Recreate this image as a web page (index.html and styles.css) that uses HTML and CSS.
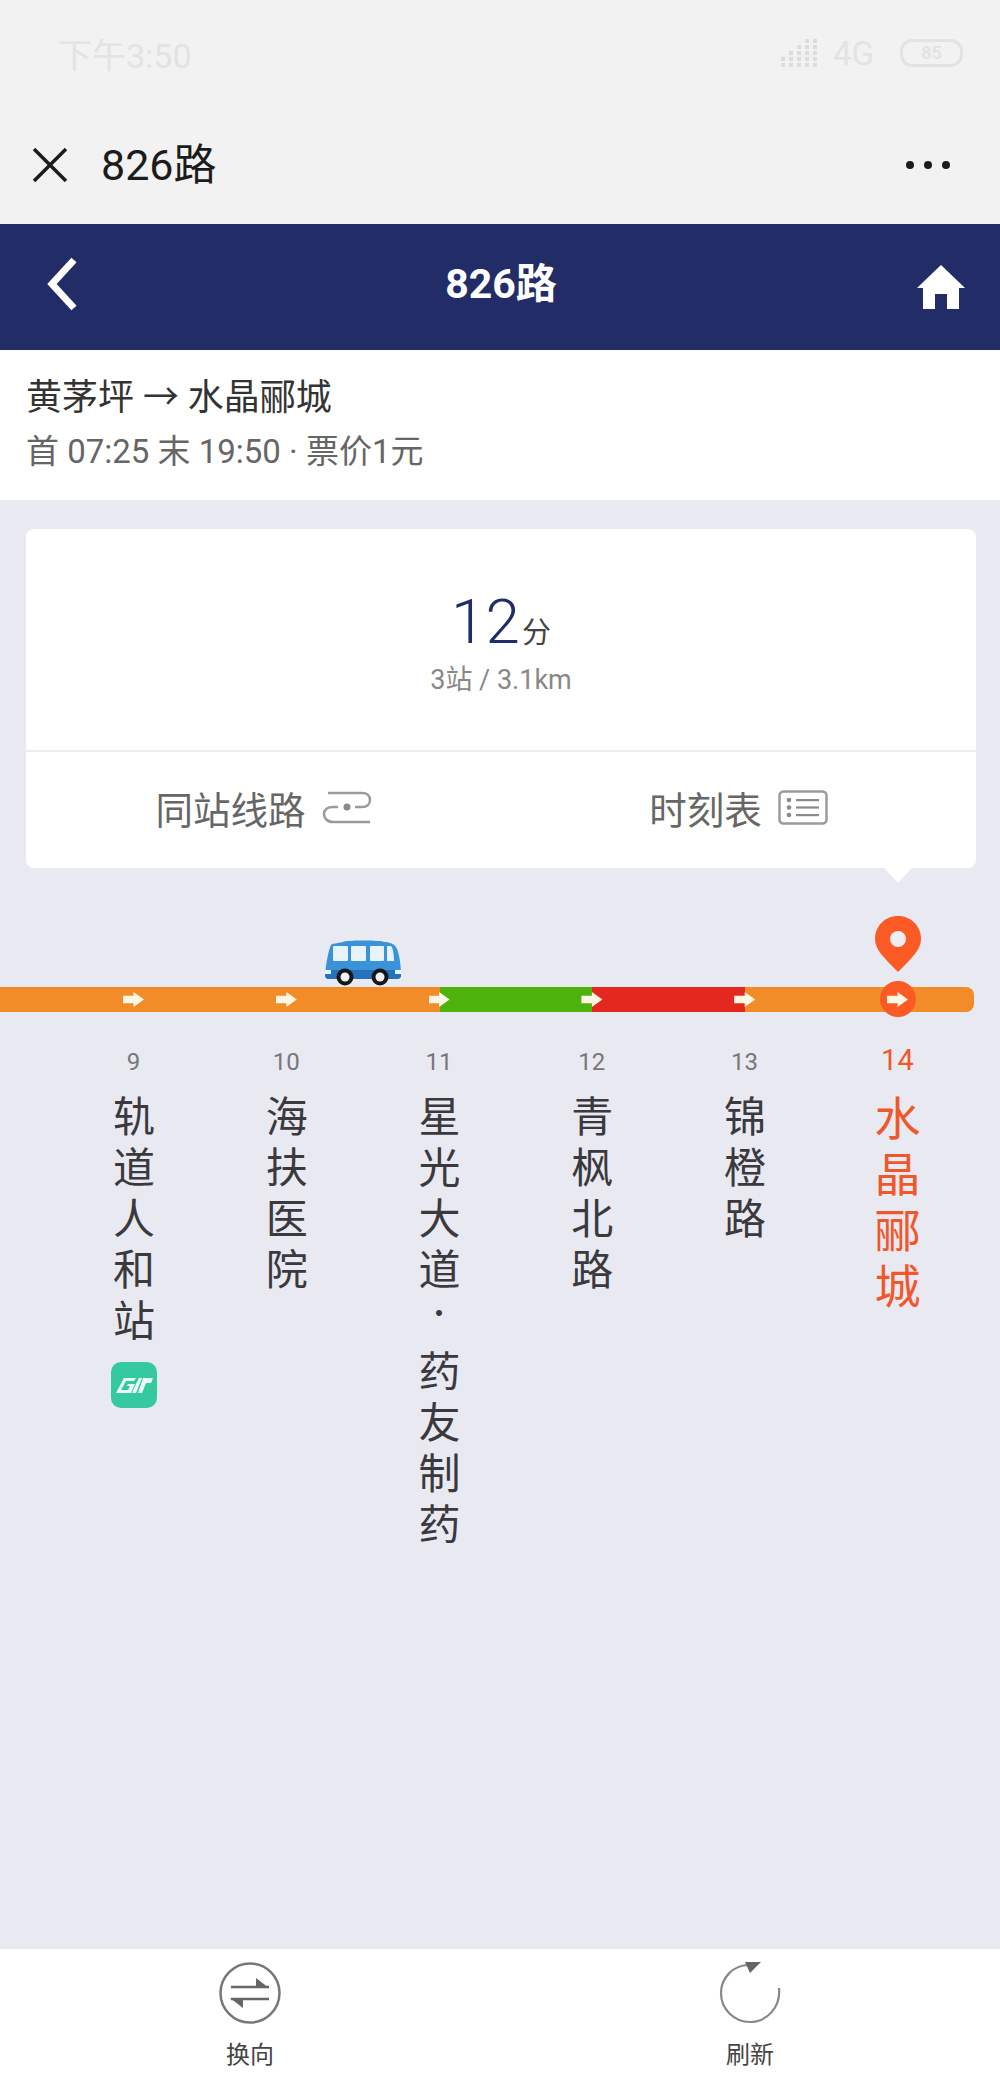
FILE: index.html
```html
<!DOCTYPE html>
<html lang="zh-CN">
<head>
    <meta charset="UTF-8">
    <title>826路</title>
    <link rel="stylesheet" href="styles.css">
</head>
<body>
    <div class="page">
        <div class="top-area">
            <div class="status-bar">
                <span class="status-time">下午3:50</span>
                <div class="status-right">
                    <svg class="signal" width="38" height="28" viewBox="0 0 38 28">
                        <g fill="none" stroke="#dcdcdc" stroke-width="4" stroke-dasharray="4 2">
                            <path d="M2 28V18"/><path d="M10 28V12"/><path d="M18 28V6"/><path d="M26 28V0"/><path d="M34 28V0"/>
                        </g>
                    </svg>
                    <span class="status-net">4G</span>
                    <span class="battery">85</span>
                </div>
            </div>
            <div class="wx-bar">
                <svg class="wx-close" width="36" height="34" viewBox="0 0 36 34">
                    <path d="M2 1L34 33M34 1L2 33" fill="none" stroke="#1c1c1c" stroke-width="3.5"/>
                </svg>
                <span class="wx-title">826路</span>
                <span class="wx-more"><i></i><i></i><i></i></span>
            </div>
        </div>

        <header class="line-header">
            <svg class="back-icon" width="32" height="54" viewBox="0 0 32 54">
                <path d="M28 3L6 27L28 51" fill="none" stroke="#fff" stroke-width="7"/>
            </svg>
            <span class="line-name">826路</span>
            <svg class="home-icon" width="50" height="46" viewBox="0 0 50 46">
                <path d="M25 1L49 24H43V45H31V30H19V45H7V24H1Z" fill="#fff"/>
            </svg>
        </header>

        <section class="line-info">
            <div class="route">黄茅坪 → 水晶郦城</div>
            <div class="times">首 07:25 末 19:50 · 票价1元</div>
        </section>

        <main class="content">
            <div class="eta-card">
                <div class="eta-main">
                    <div class="eta-time"><span class="eta-num">12</span><span class="eta-unit">分</span></div>
                    <div class="eta-sub">3站 / 3.1km</div>
                </div>
                <div class="eta-links">
                    <div class="eta-link">
                        同站线路
                        <svg width="50" height="34" viewBox="0 0 50 34">
                            <g fill="none" stroke="#9a9a9a" stroke-width="2.5">
                                <path d="M6 3H40C45 3 48 6 48 10C48 14 45 17 40 17H33"/>
                                <path d="M48 32H11C5 32 2 28 2 24C2 20 5 17 11 17H16"/>
                            </g>
                            <circle cx="25" cy="17" r="3.5" fill="#8a8a8a"/>
                        </svg>
                    </div>
                    <div class="eta-link">
                        时刻表
                        <svg width="50" height="35" viewBox="0 0 50 35">
                            <rect x="1.5" y="1.5" width="47" height="32" rx="4" fill="none" stroke="#9a9a9a" stroke-width="2.5"/>
                            <g fill="#8a8a8a">
                                <circle cx="11" cy="10" r="2.3"/><circle cx="11" cy="17.5" r="2.3"/><circle cx="11" cy="25" r="2.3"/>
                                <rect x="18" y="9" width="23" height="2.2"/><rect x="18" y="16.4" width="23" height="2.2"/><rect x="18" y="24" width="23" height="2.2"/>
                            </g>
                        </svg>
                    </div>
                </div>
            </div>

            <div class="bus-line">
                <div class="track">
                    <div class="seg seg-lead"></div>
                    <div class="seg seg-orange mark"></div>
                    <div class="seg seg-orange mark"></div>
                    <div class="seg seg-green mark"></div>
                    <div class="seg seg-red mark"></div>
                    <div class="seg seg-orange mark"></div>
                    <div class="seg seg-end"></div>

                    <svg class="bus" width="76" height="46" viewBox="0 0 76 46">
                        <path d="M6 5C7 3 17 3 18 2C19 0 58 0 59 2C65 2 70 4 72 9C74 14 76 24 76 35C76 38 74 39 72 39H4C1 39 0 37 0 34C1 24 3 12 6 5Z" fill="#3a93d8"/>
                        <path d="M0 30H76V35C76 38 74 39 72 39H4C1 39 0 37 0 34Z" fill="#2273bb"/>
                        <g fill="#e6f3fb">
                            <rect x="8" y="6" width="15" height="15" rx="1"/>
                            <rect x="26" y="6" width="15" height="15" rx="1"/>
                            <rect x="45" y="6" width="14" height="15" rx="1"/>
                            <path d="M62 6H66C68 8 69 15 69 21H62Z"/>
                            <rect x="0" y="30" width="6" height="4"/>
                            <rect x="70" y="30" width="6" height="4"/>
                        </g>
                        <circle cx="20" cy="37" r="8.5" fill="#14181c"/>
                        <circle cx="20" cy="37" r="4.5" fill="#f2f2f2"/>
                        <circle cx="55" cy="37" r="8.5" fill="#14181c"/>
                        <circle cx="55" cy="37" r="4.5" fill="#f2f2f2"/>
                    </svg>
                    <svg class="pin" width="48" height="56" viewBox="0 0 48 56">
                        <path d="M24 0C37 0 47 10 47 23C47 33 39 41 24 56C9 41 1 33 1 23C1 10 11 0 24 0Z" fill="#fb5a24"/>
                        <circle cx="24" cy="23" r="8" fill="#f0eef0"/>
                    </svg>
                    <span class="stop-here"></span>
                </div>

                <ol class="stations">
                    <li class="station">
                        <span class="station-no">9</span>
                        <span class="station-name">轨道人和站</span>
                        <svg class="metro-badge" width="46" height="46" viewBox="0 0 46 46">
                            <rect width="46" height="46" rx="10" fill="#35c9a0"/>
                            <path d="M13 16H25L23 19H15L10 28H17L19 24H16L17 22H24L20 31H5Z" fill="#eafbf5"/>
                            <path d="M25 22L28 16H31L25 31H21ZM32 16H42L40 21H35L31 31H27Z" fill="#eafbf5"/>
                        </svg>
                    </li>
                    <li class="station">
                        <span class="station-no">10</span>
                        <span class="station-name">海扶医院</span>
                    </li>
                    <li class="station">
                        <span class="station-no">11</span>
                        <span class="station-name">星光大道<span class="name-dot">·</span>药友制药</span>
                    </li>
                    <li class="station">
                        <span class="station-no">12</span>
                        <span class="station-name">青枫北路</span>
                    </li>
                    <li class="station">
                        <span class="station-no">13</span>
                        <span class="station-name">锦橙路</span>
                    </li>
                    <li class="station current">
                        <span class="station-no">14</span>
                        <span class="station-name">水晶郦城</span>
                    </li>
                </ol>
            </div>
        </main>

        <footer class="bottom-bar">
            <div class="bottom-btn">
                <svg width="62" height="62" viewBox="0 0 62 62">
                    <circle cx="31" cy="31" r="29.5" fill="none" stroke="#777" stroke-width="2.5"/>
                    <path d="M12 25H50" fill="none" stroke="#666" stroke-width="2.5"/>
                    <path d="M37 16L50 26H37Z" fill="#666"/>
                    <path d="M12 37H50" fill="none" stroke="#666" stroke-width="2.5"/>
                    <path d="M24 46L11 36H24Z" fill="#666"/>
                </svg>
                <span>换向</span>
            </div>
            <div class="bottom-btn">
                <svg width="62" height="62" viewBox="0 0 62 62">
                    <path d="M60 26C62 45 48 60 31 60C15 60 2 47 2 31C2 16 14 3 30 3" fill="none" stroke="#888" stroke-width="2.2"/>
                    <path d="M26 0H42L31 11Z" fill="#666"/>
                </svg>
                <span>刷新</span>
            </div>
        </footer>
    </div>
</body>
</html>
```

FILE: styles.css
```css
* {
    box-sizing: border-box;
}
body {
    margin: 0;
    font-family: Roboto, "Noto Sans CJK SC", sans-serif;
    color: #333;
    background-color: #e9e9f1;
}
.page {
    display: flex;
    flex-direction: column;
    width: 1000px;
    height: 2077px;
    overflow: hidden;
}

/* system + wechat bars */
.top-area {
    height: 224px;
    background-color: #f2f2f2;
}
.status-bar {
    display: flex;
    justify-content: space-between;
    align-items: center;
    height: 106px;
    padding: 0 37px 0 58px;
    color: #e3e3e3;
}
.status-time {
    font-size: 34px;
}
.status-right {
    display: flex;
    align-items: center;
    gap: 14px;
}
.status-net {
    font-size: 33px;
    margin-right: 12px;
}
.battery {
    width: 63px;
    height: 28px;
    border: 3px solid #e3e3e3;
    border-radius: 12px;
    font-size: 18px;
    line-height: 22px;
    text-align: center;
    font-weight: 700;
}
.wx-bar {
    display: flex;
    align-items: center;
    height: 114px;
    padding: 4px 50px 0 32px;
}
.wx-title {
    flex: 1;
    margin-left: 33px;
    font-size: 43px;
    line-height: 50px;
    color: #1c1c1c;
}
.wx-more {
    display: flex;
    gap: 10px;
}
.wx-more i {
    width: 8px;
    height: 8px;
    border-radius: 50%;
    background-color: #1c1c1c;
}

.line-header {
    display: flex;
    justify-content: space-between;
    align-items: center;
    height: 126px;
    padding: 0 34px 0 46px;
    background-color: #222d68;
}
.back-icon {
    margin-bottom: 6px;
}
.line-name {
    margin-left: 8px;
    padding-bottom: 14px;
    font-size: 41px;
    font-weight: 700;
    color: white;
}

.line-info {
    height: 150px;
    padding: 21px 26px 0;
    background-color: white;
}
.route {
    font-size: 36px;
    line-height: 54px;
    color: #333;
}
.times {
    margin-top: 2px;
    font-size: 33px;
    line-height: 50px;
    color: #666;
}

/* main area */
.content {
    flex: 1;
    padding-top: 29px;
}
.eta-card {
    position: relative;
    margin: 0 24px 0 26px;
    height: 339px;
    background-color: white;
    border-radius: 8px;
}
.eta-card::after {
    content: "";
    position: absolute;
    right: 64px;
    bottom: -15px;
    border-left: 14px solid transparent;
    border-right: 14px solid transparent;
    border-top: 15px solid white;
}
.eta-main {
    height: 223px;
    padding-top: 55px;
    text-align: center;
    border-bottom: 2px solid #ececf0;
}
.eta-time {
    height: 76px;
    color: #222d68;
}
.eta-num {
    font-size: 62px;
    font-weight: 300;
    line-height: 76px;
}
.eta-unit {
    margin-left: 2px;
    font-size: 29px;
    color: #444;
}
.eta-sub {
    margin-top: 3px;
    font-size: 27px;
    line-height: 34px;
    color: #888;
}
.eta-links {
    display: flex;
    height: 116px;
}
.eta-link {
    display: flex;
    flex: 1;
    justify-content: center;
    align-items: center;
    padding-bottom: 6px;
    font-size: 37.5px;
    color: #666;
}
.eta-link svg {
    margin-left: 16px;
}

/* bus line */
.bus-line {
    margin-top: 119px;
}
.track {
    position: relative;
    display: flex;
    height: 25px;
    margin-right: 26px;
}
.seg {
    position: relative;
    width: 152.8px;
}
.seg-lead {
    width: 134px;
    background-color: #f28c28;
}
.seg-orange {
    background-color: #f28c28;
}
.seg-green {
    background-color: #4db30c;
}
.seg-red {
    background-color: #e2281f;
}
.seg-end {
    flex: 1;
    background-color: #f28c28;
    border-radius: 0 8px 8px 0;
}
.mark::before,
.seg-end::before {
    content: "";
    position: absolute;
    left: -11px;
    top: 5px;
    z-index: 2;
    width: 21px;
    height: 15px;
    background-color: #fff6e4;
    clip-path: polygon(0 25%, 50% 25%, 50% 0, 100% 50%, 50% 100%, 50% 75%, 0 75%);
}
.bus {
    position: absolute;
    left: 325px;
    top: -47px;
}
.pin {
    position: absolute;
    left: 874px;
    top: -71px;
}
.stop-here {
    position: absolute;
    left: 880px;
    top: -6px;
    z-index: 1;
    width: 36px;
    height: 36px;
    border-radius: 50%;
    background-color: #fb5a24;
}

.stations {
    display: flex;
    margin: 0;
    padding: 0 0 0 57px;
    list-style: none;
}
.station {
    display: flex;
    flex-direction: column;
    align-items: center;
    width: 152.8px;
    padding-top: 36px;
}
.station-no {
    font-size: 24px;
    line-height: 28px;
    color: #777;
}
.station-name {
    margin-top: 19px;
    writing-mode: vertical-rl;
    text-orientation: upright;
    font-family: "Noto Sans CJK SC", sans-serif;
    font-size: 42px;
    line-height: 42px;
    letter-spacing: 9px;
    color: #3a3a3e;
}
.name-dot {
    font-size: 28px;
    letter-spacing: 23px;
}
.metro-badge {
    margin-top: 12px;
    margin-left: 2px;
}
.current .station-no {
    margin-top: -3px;
    font-size: 29px;
    line-height: 30px;
    color: #f0572a;
}
.current .station-name {
    margin-top: 20px;
    font-size: 46px;
    line-height: 46px;
    letter-spacing: 10px;
    color: #f0572a;
}

.bottom-bar {
    display: flex;
    height: 128px;
    background-color: white;
}
.bottom-btn {
    display: flex;
    flex: 1;
    flex-direction: column;
    align-items: center;
    padding-top: 13px;
    font-size: 24px;
    color: #444;
}
.bottom-btn span {
    margin-top: 14px;
    line-height: 34px;
}
```
